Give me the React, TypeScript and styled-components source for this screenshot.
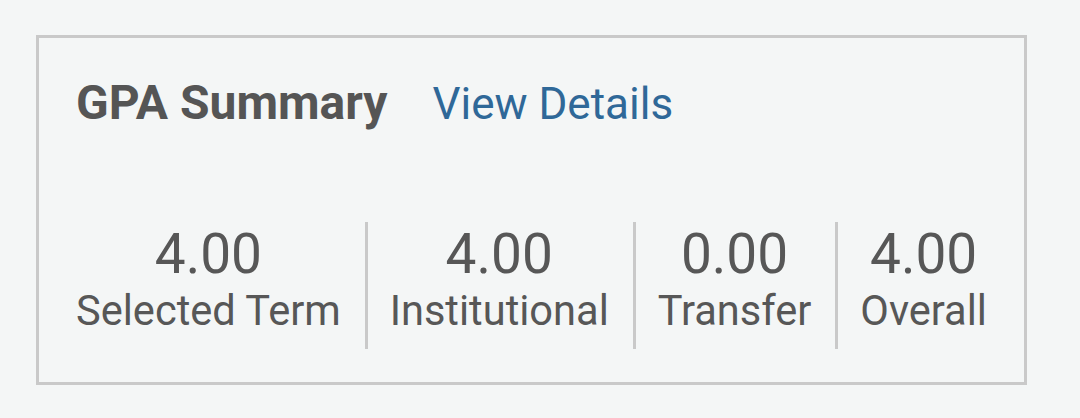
import React from "react";
import styled, { createGlobalStyle } from "styled-components";

const GlobalStyle = createGlobalStyle`
  html, body {
    margin: 0;
    padding: 0;
    background: #f4f6f6;
  }
  body {
    font-family: Roboto, "Liberation Sans", sans-serif;
    color: #575757;
  }
`;

const Page = styled.div`
  padding: 35px 0 0 36px;
`;

const Card = styled.section`
  box-sizing: border-box;
  width: 991px;
  height: 350px;
  border: 3px solid #c9c9c9;
  padding: 37px 13px 0;
  display: flex;
  flex-direction: column;
`;

const Header = styled.div`
  display: flex;
  align-items: baseline;
  gap: 45px;
  padding-left: 24px;
`;

const Title = styled.h2`
  margin: 0;
  font-size: 48px;
  font-weight: 700;
  line-height: 55px;
  color: #555555;
`;

const DetailsLink = styled.a`
  font-size: 44px;
  line-height: 55px;
  color: #2f6898;
  text-decoration: none;
  cursor: pointer;
`;

const Stats = styled.div`
  margin-top: 90px;
  padding: 0 2px;
  display: flex;
  justify-content: space-between;
`;

const Stat = styled.div<{ $divider?: boolean }>`
  display: flex;
  flex-direction: column;
  align-items: center;
  padding: 0 22px 14px;
  border-left: ${(p) => (p.$divider ? "3px solid #c9c9c9" : "none")};
`;

const Value = styled.span`
  font-size: 55px;
  line-height: 64px;
`;

const Label = styled.span`
  font-size: 41.6px;
  line-height: 49px;
  white-space: nowrap;
`;

const stats = [
  { value: "4.00", label: "Selected Term" },
  { value: "4.00", label: "Institutional" },
  { value: "0.00", label: "Transfer" },
  { value: "4.00", label: "Overall" },
];

export default function App() {
  return (
    <>
      <GlobalStyle />
      <Page>
        <Card>
          <Header>
            <Title>GPA Summary</Title>
            <DetailsLink>View Details</DetailsLink>
          </Header>
          <Stats>
            {stats.map((s, i) => (
              <Stat key={s.label} $divider={i > 0}>
                <Value>{s.value}</Value>
                <Label>{s.label}</Label>
              </Stat>
            ))}
          </Stats>
        </Card>
      </Page>
    </>
  );
}
